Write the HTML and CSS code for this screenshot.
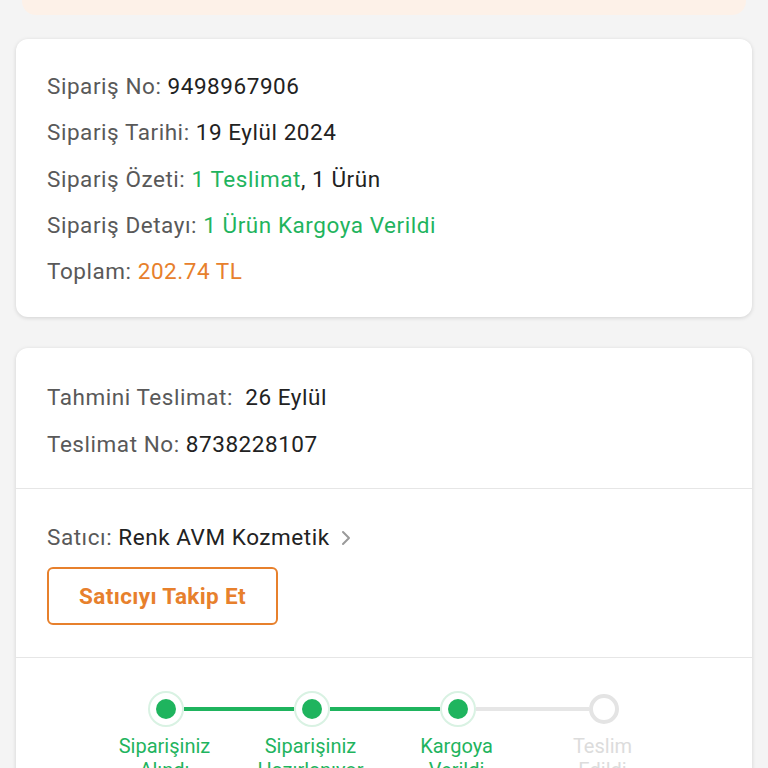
FILE: index.html
```html
<!DOCTYPE html>
<html lang="tr">

<head>
    <meta charset="UTF-8">
    <meta name="viewport" content="width=device-width, initial-scale=1.0">
    <title>Sipariş Detayı</title>
    <link rel="stylesheet" href="styles.css">
</head>

<body>
    <div class="notice"></div>

    <div class="card">
        <div class="info-block">
            <div class="row"><span class="label">Sipariş No:</span> <span class="value">9498967906</span></div>
            <div class="row"><span class="label">Sipariş Tarihi:</span> <span class="value">19 Eylül 2024</span></div>
            <div class="row"><span class="label">Sipariş Özeti:</span> <span class="green">1 Teslimat</span><span class="value">, 1 Ürün</span></div>
            <div class="row"><span class="label">Sipariş Detayı:</span> <span class="green">1 Ürün Kargoya Verildi</span></div>
            <div class="row"><span class="label">Toplam:</span> <span class="orange">202.74 TL</span></div>
        </div>
    </div>

    <div class="card">
        <div class="section delivery">
            <div class="row"><span class="label">Tahmini Teslimat:</span>&nbsp; <span class="value">26 Eylül</span></div>
            <div class="row"><span class="label">Teslimat No:</span> <span class="value">8738228107</span></div>
        </div>

        <div class="section seller">
            <div class="row">
                <span class="label">Satıcı:</span> <span class="value">Renk AVM Kozmetik</span><svg class="chevron" width="10" height="16" viewBox="0 0 10 16">
                    <path d="M2 2 L8 8 L2 14" fill="none" stroke="#9a9a9a" stroke-width="2" stroke-linecap="round" stroke-linejoin="round" />
                </svg>
            </div>
            <button type="button" class="follow-btn">Satıcıyı Takip Et</button>
        </div>

        <div class="section tracking">
            <div class="track">
                <div class="dot done"><span></span></div>
                <div class="line done"></div>
                <div class="dot done"><span></span></div>
                <div class="line done"></div>
                <div class="dot done"><span></span></div>
                <div class="line todo"></div>
                <div class="dot todo"></div>
            </div>
            <div class="step-labels">
                <div class="step-label done">Siparişiniz<br>Alındı</div>
                <div class="step-label done">Siparişiniz<br>Hazırlanıyor</div>
                <div class="step-label done">Kargoya<br>Verildi</div>
                <div class="step-label todo">Teslim<br>Edildi</div>
            </div>
        </div>
    </div>
</body>

</html>
```

FILE: styles.css
```css
body {
    font-family: Roboto, "Noto Sans", Arial, sans-serif;
    background-color: #f4f4f4;
    margin: 0;
    color: #222;
}

.notice {
    height: 15px;
    margin: 0 22px;
    background-color: #fdf1e8;
    border-radius: 0 0 14px 14px;
}

.card {
    background: white;
    margin: 24px 16px 0;
    border-radius: 12px;
    box-shadow: 0 1px 4px rgba(0, 0, 0, 0.14);
    overflow: hidden;
}

.card + .card {
    margin-top: 31px;
}

.info-block {
    padding: 24px 31px 23px;
}

.row {
    font-size: 22.5px;
    letter-spacing: 0.55px;
    line-height: 46.25px;
    white-space: nowrap;
}

.label {
    color: #595959;
}

.value {
    color: #222;
}

.green {
    color: #1fb45e;
}

.orange {
    color: #e7802c;
}

.section {
    padding: 0 31px;
    border-bottom: 1px solid #e6e6e6;
}

.delivery {
    padding-top: 26px;
    padding-bottom: 21px;
}

.seller {
    padding-top: 25px;
    padding-bottom: 32px;
}

.chevron {
    margin-left: 11px;
    vertical-align: -1px;
}

.follow-btn {
    display: block;
    margin-top: 7px;
    width: 231px;
    height: 58px;
    background: white;
    border: 2px solid #e7802c;
    border-radius: 6px;
    color: #e7802c;
    font-family: inherit;
    font-size: 22.5px;
    letter-spacing: 0.35px;
    font-weight: bold;
    cursor: pointer;
}

.tracking {
    border-bottom: none;
    padding: 33px 30px 20px 29px;
}

.track {
    display: flex;
    justify-content: center;
    align-items: center;
}

.dot {
    box-sizing: border-box;
    border-radius: 50%;
    display: flex;
    justify-content: center;
    align-items: center;
    flex: none;
}

.dot.done {
    width: 36px;
    height: 36px;
    border: 2px solid #d9f2e3;
    background: white;
}

.dot.done span {
    width: 20px;
    height: 20px;
    border-radius: 50%;
    background-color: #1fb45e;
}

.dot.todo {
    width: 30px;
    height: 30px;
    border: 4px solid #e4e4e4;
}

.line {
    height: 4px;
    flex: 0 0 110px;
}

.line.done {
    background-color: #1fb45e;
}

.line.todo {
    flex-basis: 113px;
    background-color: #e6e6e6;
}

.step-labels {
    display: grid;
    grid-template-columns: repeat(4, 146px);
    justify-content: center;
    margin-top: 7px;
}

.step-label {
    text-align: center;
    font-size: 20px;
    line-height: 24px;
}

.step-label.done {
    color: #1fb45e;
}

.step-label.todo {
    color: #dcdcdc;
}
```
